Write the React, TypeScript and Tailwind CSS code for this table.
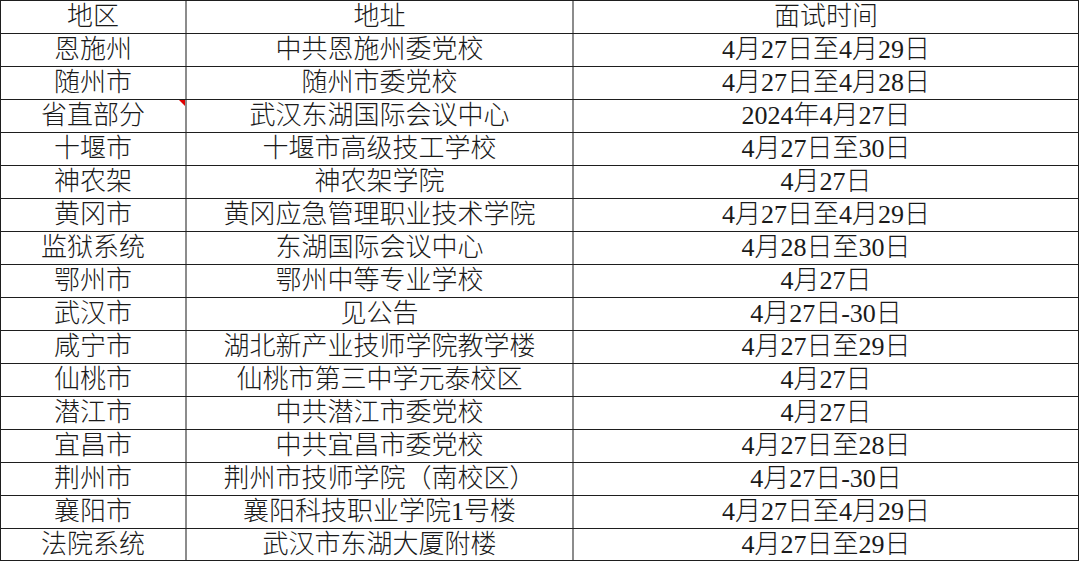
const rows: [string, string, string][] = [
  ["恩施州", "中共恩施州委党校", "4月27日至4月29日"],
  ["随州市", "随州市委党校", "4月27日至4月28日"],
  ["省直部分", "武汉东湖国际会议中心", "2024年4月27日"],
  ["十堰市", "十堰市高级技工学校", "4月27日至30日"],
  ["神农架", "神农架学院", "4月27日"],
  ["黄冈市", "黄冈应急管理职业技术学院", "4月27日至4月29日"],
  ["监狱系统", "东湖国际会议中心", "4月28日至30日"],
  ["鄂州市", "鄂州中等专业学校", "4月27日"],
  ["武汉市", "见公告", "4月27日-30日"],
  ["咸宁市", "湖北新产业技师学院教学楼", "4月27日至29日"],
  ["仙桃市", "仙桃市第三中学元泰校区", "4月27日"],
  ["潜江市", "中共潜江市委党校", "4月27日"],
  ["宜昌市", "中共宜昌市委党校", "4月27日至28日"],
  ["荆州市", "荆州市技师学院（南校区）", "4月27日-30日"],
  ["襄阳市", "襄阳科技职业学院1号楼", "4月27日至4月29日"],
  ["法院系统", "武汉市东湖大厦附楼", "4月27日至29日"],
];

function Row({ cells, note, last }: { cells: [string, string, string]; note?: boolean; last?: boolean }) {
  return (
    <div
      className={
        "grid grid-cols-[186px_387px_1fr] border-b border-[#1e1e1e] " + (last ? "h-[32px]" : "h-[33px]")
      }
    >
      <div className="relative flex items-center justify-center border-r-2 border-[#8c8c8c]">
        {cells[0]}
        {note && (
          <span className="absolute right-0 top-0 h-0 w-0 border-l-[6px] border-t-[6px] border-l-transparent border-t-[#e00000]" />
        )}
      </div>
      <div className="flex items-center justify-center border-r-2 border-[#8c8c8c]">{cells[1]}</div>
      <div className="flex items-center justify-center">{cells[2]}</div>
    </div>
  );
}

export default function App() {
  return (
    <div className="h-[561px] w-[1080px] overflow-hidden bg-white">
      <div
        className="w-[1079px] border-l border-r border-t border-[#1e1e1e] text-[26px] font-light leading-none text-[#1a1a1a]"
        style={{ fontFamily: '"Liberation Serif", "Noto Sans CJK SC", serif' }}
      >
        <Row cells={["地区", "地址", "面试时间"]} />
        {rows.map((r, i) => (
          <Row key={r[0]} cells={r} note={i === 2} last={i === rows.length - 1} />
        ))}
      </div>
    </div>
  );
}
